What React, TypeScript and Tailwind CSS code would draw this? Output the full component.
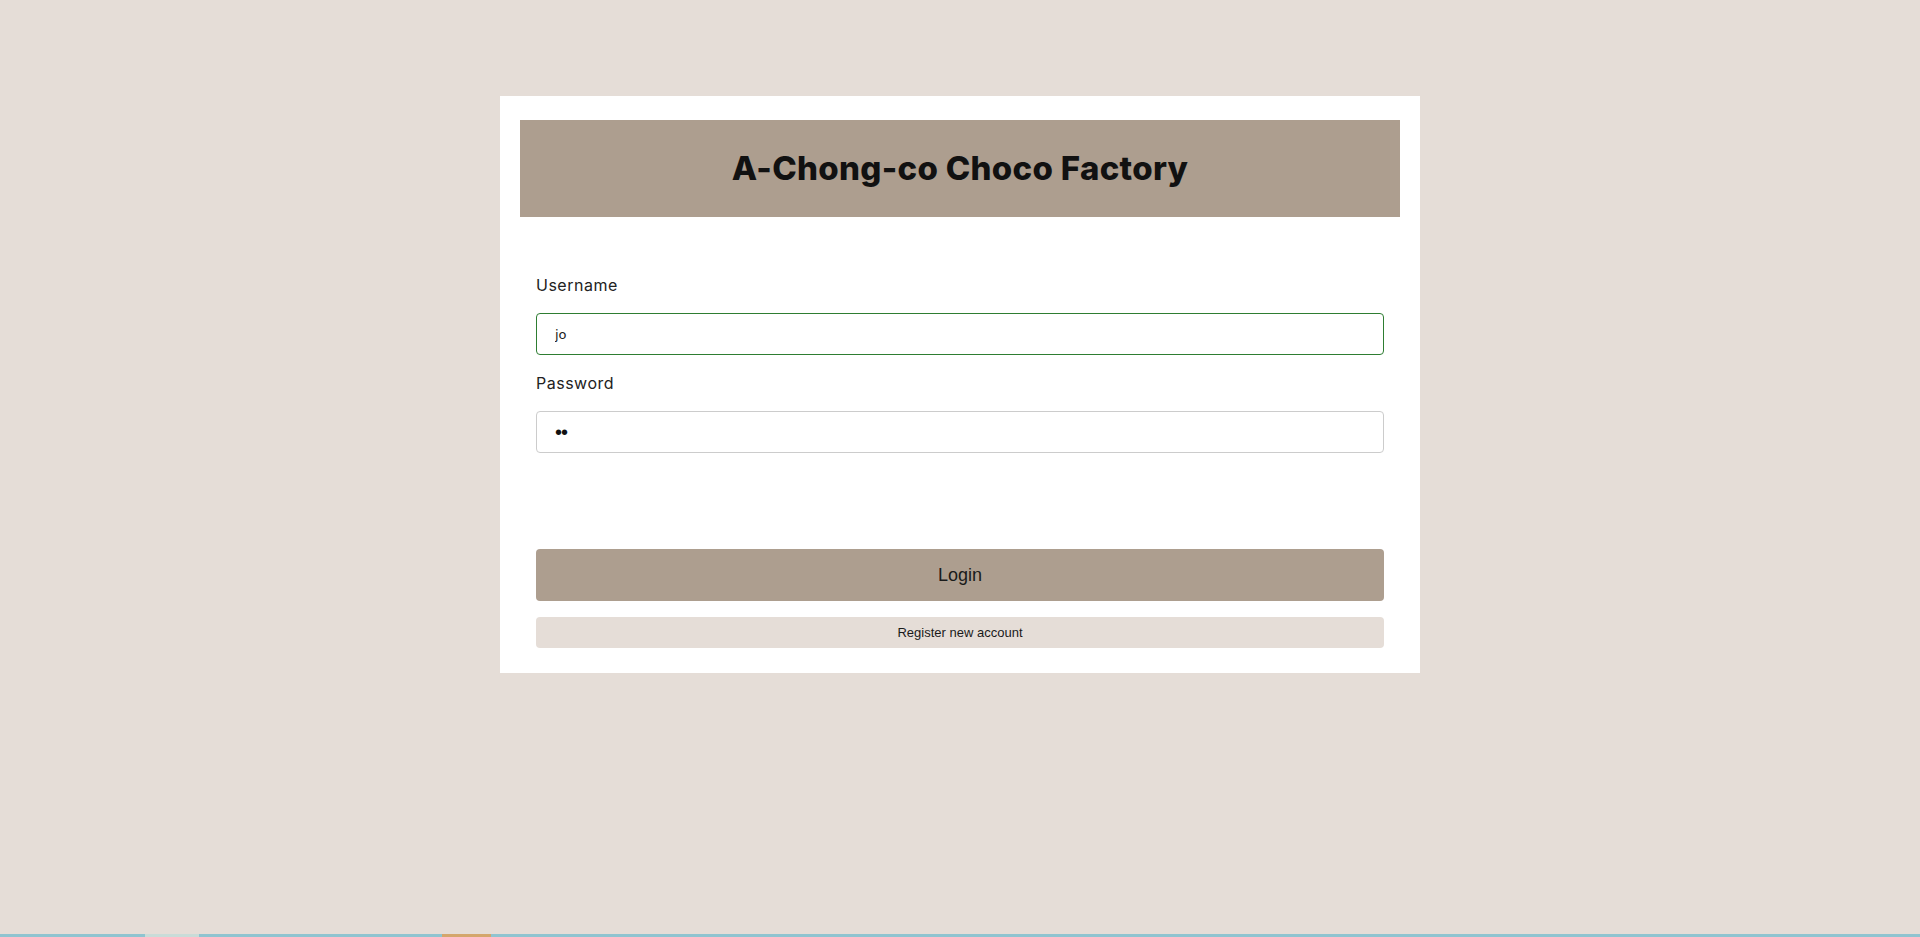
export default function App() {
  return (
    <div className="h-screen w-full bg-[#e5ddd7] flex flex-col overflow-hidden">
      {/* Page */}
      <div className="flex-1 flex justify-center pt-[96px]">
        <div className="w-[920px] h-fit bg-white pt-6 px-5 pb-[25px]">
          {/* Header */}
          <div className="h-[97px] bg-[#ad9e8f] flex items-center justify-center">
            <h1 className="font-['Inter',sans-serif] font-extrabold text-[33px] text-[#111] tracking-[0.3px]">
              A-Chong-co Choco Factory
            </h1>
          </div>

          {/* Form */}
          <div className="px-4 pt-[56px] flex flex-col">
            <label className="font-['Inter',sans-serif] text-[16px] leading-6 tracking-[0.5px] text-[#222]">Username</label>
            <input
              readOnly
              value="jo"
              className="mt-4 h-[42px] w-full rounded border border-[#2e7d32] px-[18px] font-['DejaVu_Sans',sans-serif] text-[13px] text-[#222] outline-none"
            />
            <label className="mt-4 font-['Inter',sans-serif] text-[16px] leading-6 tracking-[0.5px] text-[#222]">Password</label>
            <input
              readOnly
              type="password"
              value="jo"
              className="mt-4 h-[42px] w-full rounded border border-[#cccccc] px-[18px] font-['Liberation_Sans',sans-serif] text-[20px] tracking-[-1px] text-[#111] outline-none"
            />

            <button className="mt-[96px] h-[52px] w-full rounded bg-[#ad9e8f] font-['Liberation_Sans',sans-serif] text-[18px] text-[#1a1a1a]">
              Login
            </button>
            <button className="mt-4 h-[31px] w-full rounded-sm bg-[#e5ddd7] font-['Liberation_Sans',sans-serif] text-[13px] text-[#1a1a1a]">
              Register new account
            </button>
          </div>
        </div>
      </div>

      {/* Bottom strip */}
      <div className="h-[3px] flex bg-[#8fc4d0]">
        <div className="w-[145px]" />
        <div className="w-[54px] bg-[#c9dcd8]" />
        <div className="w-[243px]" />
        <div className="w-[49px] bg-[#d4a66c]" />
      </div>
    </div>
  )
}
